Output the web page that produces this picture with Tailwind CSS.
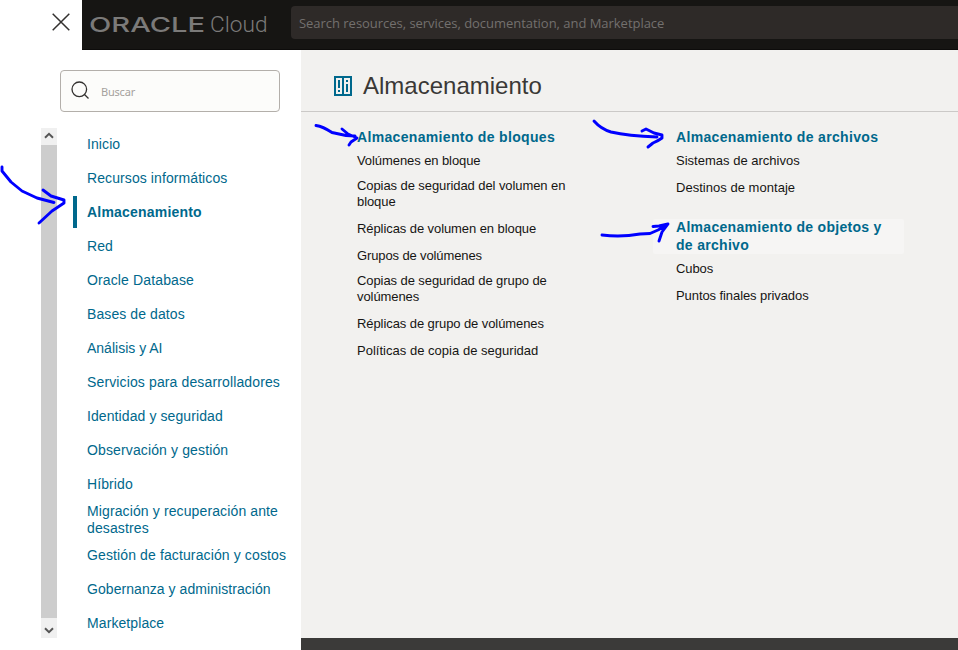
<!DOCTYPE html>
<html lang="es">
<head>
<meta charset="utf-8">
<title>Oracle Cloud</title>
<script src="https://cdn.jsdelivr.net/npm/@tailwindcss/browser@4"></script>
</head>
<body class="relative w-[958px] h-[650px] overflow-hidden bg-white font-['Liberation_Sans',Arial,sans-serif] flex flex-col">
<header class="h-[50px] flex shrink-0">
  <button class="w-[82px] pl-[52px] pt-[13px] flex items-start" aria-label="Cerrar">
    <svg width="18" height="18" viewBox="0 0 18 18" fill="none" stroke="#33312f" stroke-width="1.5"><path d="M.7.7 17.3 17.3M17.3.7.7 17.3"/></svg>
  </button>
  <div class="flex-1 bg-[#161513] flex border-b border-[#0d0c0b]">
    <svg class="shrink-0" width="209" height="49" viewBox="0 0 209 49" fill="#7b7a79">
      <text x="7" y="31.7" font-family="Inter, sans-serif" font-size="20.5" font-weight="500" textLength="116" lengthAdjust="spacingAndGlyphs">ORACLE</text>
      <text x="128" y="32" font-family="Roboto, sans-serif" font-weight="300" font-size="22" textLength="57.5" lengthAdjust="spacingAndGlyphs">Cloud</text>
    </svg>
    <div class="flex-1 mt-[6px] h-[33px] rounded-l bg-[#2e2a28] pl-[8px] pt-[2px] flex items-center text-[13px] tracking-[-0.03px] text-[#73706e] font-['Open_Sans',sans-serif] whitespace-nowrap">Search resources, services, documentation, and Marketplace</div>
  </div>
</header>
<div class="flex flex-1 min-h-0">
  <aside class="w-[301px] shrink-0 pt-[20px]">
    <div class="ml-[60px] w-[220px] h-[42px] border border-[#b3afaa] rounded bg-[#fcfcfa] flex items-center">
      <svg class="ml-[10px] mt-[-1px]" width="19" height="19" viewBox="0 0 19 19" fill="none" stroke="#33312f" stroke-width="1.3"><circle cx="8.3" cy="8.3" r="7.3"/><path d="m13.5 13.5 4 4"/></svg>
      <span class="ml-[11px] mt-[2px] text-[11px] tracking-[-0.2px] text-[#a5a19d] font-['Noto_Sans',sans-serif]">Buscar</span>
    </div>
    <div class="flex mt-[15px]">
      <div class="ml-[41px] mt-[1px] w-[16px] h-[510px] bg-[#cdcdcd] flex flex-col justify-between">
        <div class="h-[17px] bg-[#f0f0f0] flex justify-center items-center pr-[1px] pb-[2px]"><svg width="10" height="7" viewBox="0 0 10 7" fill="none" stroke="#555" stroke-width="2"><path d="M1 5.7 5 1.8l4 3.9"/></svg></div>
        <div class="h-[20px] bg-[#f0f0f0] flex justify-center items-center pt-[4px] pr-[1px]"><svg width="10" height="7" viewBox="0 0 10 7" fill="none" stroke="#555" stroke-width="2"><path d="m1 1.3 4 3.9 4-3.9"/></svg></div>
      </div>
      <nav class="ml-[16px] text-[14px] leading-[17px] tracking-[0.09px] text-[#00688c] whitespace-nowrap *:pl-[14px] *:flex *:items-center *:h-[34px]">
        <a>Inicio</a>
        <a>Recursos informáticos</a>
        <a class="relative font-bold tracking-[0.2px]"><i class="absolute left-0 top-[1px] w-[4px] h-[32px] bg-[#00688c]"></i>Almacenamiento</a>
        <a>Red</a>
        <a class="tracking-[0.13px]">Oracle Database</a>
        <a>Bases de datos</a>
        <a class="tracking-[0px]">Análisis y AI</a>
        <a class="tracking-[0.13px]">Servicios para desarrolladores</a>
        <a>Identidad y seguridad</a>
        <a class="tracking-[0.13px]">Observación y gestión</a>
        <a>Híbrido</a>
        <a class="h-[37px]! tracking-[0.12px]">Migración y recuperación ante<br>desastres</a>
        <a class="tracking-[0.12px]">Gestión de facturación y costos</a>
        <a class="tracking-[0.06px]">Gobernanza y administración</a>
        <a>Marketplace</a>
      </nav>
    </div>
  </aside>
  <main class="flex-1 bg-[#f2f1ef] flex flex-col">
    <div class="h-[62px] shrink-0 border-b border-[#cbc9c7] flex items-center pl-[33px] pt-[10px]">
      <svg width="18" height="20" viewBox="0 0 18 20" shape-rendering="crispEdges"><path fill="#00688c" fill-rule="evenodd" d="M0 0h18v20H0zM2 2v16h6V2zM10 2v16h6V2z"/><path fill="#00688c" d="M4 4h2v8H4zM4 14h2v2H4zM12 4h2v2h-2zM12 8h2v8h-2z"/></svg>
      <h1 class="ml-[11px] text-[24px] leading-[28px] text-[#3a3836]">Almacenamiento</h1>
    </div>
    <div class="flex flex-1 text-[13px] leading-[16px] tracking-[-0.08px] text-[#161513] whitespace-nowrap">
      <section class="w-[319px] pl-[56px] pt-[16px] shrink-0">
        <h2 class="h-[19px] text-[14px] leading-[18px] font-bold tracking-[0.33px] text-[#00688c]">Almacenamiento de bloques</h2>
        <ul class="*:h-[27px] *:pt-[6px]">
          <li>Volúmenes en bloque</li>
          <li class="h-[41px]! pt-[4px]!">Copias de seguridad del volumen en<br>bloque</li>
          <li>Réplicas de volumen en bloque</li>
          <li class="tracking-[-0.12px]">Grupos de volúmenes</li>
          <li class="h-[41px]! pt-[4px]!">Copias de seguridad de grupo de<br>volúmenes</li>
          <li>Réplicas de grupo de volúmenes</li>
          <li class="tracking-[0.02px]">Políticas de copia de seguridad</li>
        </ul>
      </section>
      <section class="pl-[33px] pt-[16px]">
        <h2 class="pl-[23px] h-[19px] text-[14px] leading-[18px] font-bold tracking-[0.33px] text-[#00688c]">Almacenamiento de archivos</h2>
        <ul class="pl-[23px] *:h-[27px] *:pt-[6px]">
          <li class="tracking-[0.01px]">Sistemas de archivos</li>
          <li class="tracking-[0.03px]">Destinos de montaje</li>
        </ul>
        <h2 class="flow-root mt-[18px] w-[251px] h-[35px] pl-[23px] rounded-[2px] bg-[#f6f5f4] text-[14px] leading-[18px] font-bold tracking-[0.3px] text-[#00688c]"><span class="block -mt-px">Almacenamiento de objetos y<br>de archivo</span></h2>
        <ul class="mt-[1px] pl-[23px] *:h-[27px] *:pt-[6px]">
          <li>Cubos</li>
          <li>Puntos finales privados</li>
        </ul>
      </section>
    </div>
    <footer class="h-[12px] shrink-0 bg-[#3b3a39]"></footer>
  </main>
</div>
<svg class="absolute inset-0 pointer-events-none" width="958" height="650" viewBox="0 0 958 650" fill="none" stroke="#0000ff" stroke-width="2.9" stroke-linecap="round" stroke-linejoin="round">
  <path d="M2 167v4l9 11 11 9 15 7 17 4.500M43 190l8 6 13 4v3l-12 8-13 12"/>
  <path d="M316 125.500q7 1 16 7l14 3 9 .5M342 129l6 5 9 4-6 4-2 3"/>
  <path d="M594 121q7 8 17 11 17 4 46 5M642 131l4-2 8 4 8 2v3q-4 3-9 5l-5 4"/>
  <path d="M602 235q19 2.500 38-1l10-.5 8-3.500 9-5M653 226.500l6-.5 9-2-6 8-3 9"/>
</svg>
</body>
</html>
